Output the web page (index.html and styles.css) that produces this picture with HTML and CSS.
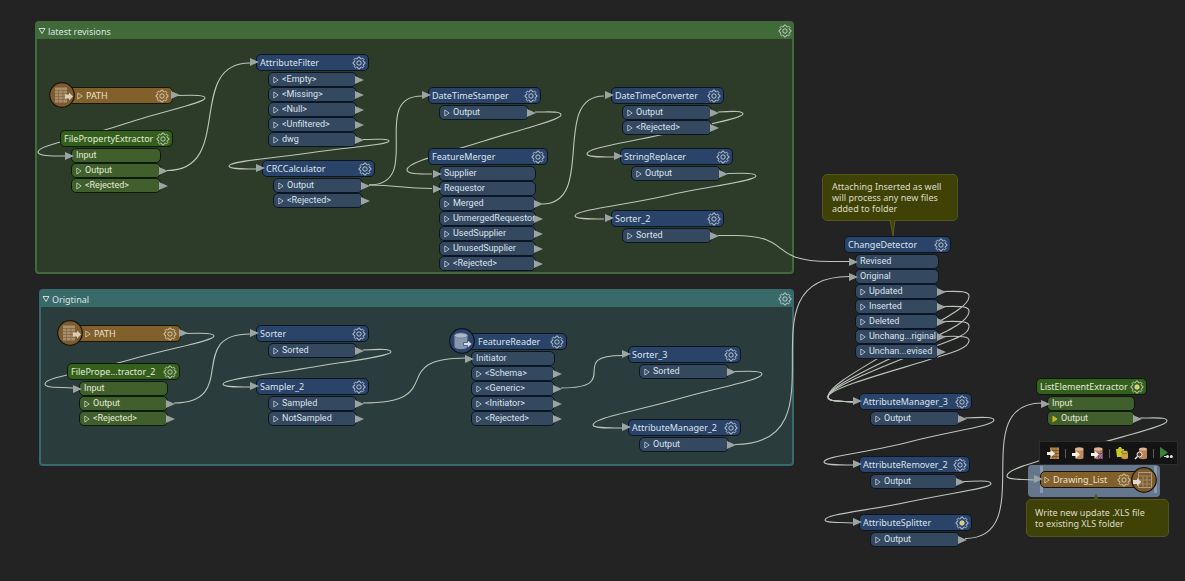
FILE: index.html
```html
<!DOCTYPE html>
<html lang="en">
<head>
<meta charset="utf-8">
<title>Workspace</title>
<link rel="stylesheet" href="styles.css">
</head>
<body>
<svg class="defs" aria-hidden="true">
  <symbol id="gear" viewBox="0 0 14 14"><path d="M12.9 6.1V7.9L11.5 8.2 11.1 9.35 11.9 10.5 10.5 11.9 9.35 11.1 8.2 11.5 7.9 12.9H6.1L5.8 11.5 4.65 11.1 3.5 11.9 2.1 10.5 2.9 9.35 2.5 8.2 1.1 7.9V6.1L2.5 5.8 2.9 4.65 2.1 3.5 3.5 2.1 4.65 2.9 5.8 2.5 6.1 1.1H7.9L8.2 2.5 9.35 2.9 10.5 2.1 11.9 3.5 11.1 4.65 11.5 5.8Z" fill="none" stroke="currentColor" stroke-width=".8"/><circle cx="7" cy="7" r="2.2" stroke="currentColor" stroke-width=".8"/></symbol>
  <symbol id="tri" viewBox="0 0 6 8"><path d="M.8 1V7L5.2 4Z" fill="var(--tri-fill, none)" stroke="currentColor" stroke-width=".7"/></symbol>
  <symbol id="reader" viewBox="0 0 26 26"><circle cx="13" cy="13" r="12.3" fill="#7d5c30" stroke="#1a140a" stroke-width="1.2"/><path d="M6 5.500H18V20.500H6Z" fill="#a78f6c"/><path d="M6 8.500H18M6 11.500H18M6 14.500H18M6 17.500H18M9.500 8V20.500M14 8V20.500" stroke="#866740" stroke-width=".8"/><path d="M16 12.500H20V10.500L24 14.500 20 18.500V16.500H16Z" fill="#dccdb6"/></symbol>
  <symbol id="writer" viewBox="0 0 26 26"><circle cx="13" cy="13" r="12.3" fill="#7d5c30" stroke="#1a140a" stroke-width="1.2"/><path d="M7.500 5.500H20.500V20.500H7.500Z" fill="none" stroke="#b19d7f"/><path d="M7.500 9H20.500M7.500 13H20.500M7.500 17H20.500M12 9V20.500M16 9V20.500" stroke="#a78f6c" stroke-width=".9"/><path d="M2 13H6V11L10.500 15 6 19V17H2Z" fill="#e4d9c8"/></symbol>
  <symbol id="database" viewBox="0 0 26 26"><circle cx="13" cy="13" r="12.3" fill="#2d4468" stroke="#0b1322" stroke-width="1.2"/><path d="M5.500 7V18.500C5.500 22 18.500 22 18.500 18.500V7Z" fill="#8796ad"/><ellipse cx="12" cy="7.500" rx="6.500" ry="2.600" fill="#a9b5c6" stroke="#5f7290" stroke-width=".6"/><path d="M14.500 14.500H18.500V12L23 16 18.500 20V17.500H14.500Z" fill="#d5dde8" stroke="#2d4468" stroke-width=".7"/></symbol>
</svg>

<main class="canvas">
  <section class="bookmark bookmark-green">
    <header><button aria-label="Collapse latest revisions"><svg width="8" height="8" viewBox="0 0 8 8"><path d="M1 1.500H7L4 6.500Z" fill="none" stroke="currentColor" stroke-width=".9"/></svg></button><h2>latest revisions</h2><button aria-label="Bookmark properties"><svg class="gear"><use href="#gear"/></svg></button></header>
  </section>
  <section class="bookmark bookmark-teal">
    <header><button aria-label="Collapse Origtinal"><svg width="8" height="8" viewBox="0 0 8 8"><path d="M1 1.500H7L4 6.500Z" fill="none" stroke="currentColor" stroke-width=".9"/></svg></button><h2>Origtinal</h2><button aria-label="Bookmark properties"><svg class="gear"><use href="#gear"/></svg></button></header>
  </section>

  <div class="selection"></div>

  <svg class="wires" aria-hidden="true">
    <path d="M178 95.500C196 95 205 95 205 98C205 103 163 111 121 125S38 145 38 152C38 156 50 156 66 156"/>
    <path d="M167 170.500C235 170.500 185 63 250 63"/>
    <path d="M363 139.500C380 139 389 139 389 141C389 145 349 147 309 153S229 161 229 166C229 169 240 169 257 169"/>
    <path d="M369 185C425 185 368 96 422 96"/>
    <path d="M369 185C400 185 400 188.500 432 188.500"/>
    <path d="M535 112C552 112 561 111 561 115C561 120 522 129 484 141S407 162 407 170C407 174 418 174 432 174"/>
    <path d="M542 204C597 204 550 96 604 96"/>
    <path d="M718 112C735 111 743 111 743 114C743 118 710 124 665 134S587 148 587 154C587 157 598 157 614 157"/>
    <path d="M727 173.500C746 173 756 173 756 176C756 181 710 186 665 196S575 210 575 216C575 219 588 219 604 219"/>
    <path d="M718 235.500H735C795 236 765 261 830 261.500H849"/>
    <path d="M735 444.500C850 444 735 276.500 849 276.500"/>
    <path d="M184 333.500C204 333 214 333 214 336C214 341 171 348 129 360S45 377 45 384C45 388 56 387 73 388"/>
    <path d="M174 403C240 403 185 334 250 334"/>
    <path d="M363 350C382 349 391 349 391 352C391 356 349 361 307 368S223 379 223 384C223 387 234 387 250 387"/>
    <path d="M363 403C450 403 385 358 466 358"/>
    <path d="M561 388C625 388 565 355.500 622 355.500"/>
    <path d="M735 371.500C753 371 762 371 762 374C762 380 720 387 678 399S593 418 593 425C593 428 604 428 622 428"/>
    <path d="M943 291.500C960 291 970 291 969 297C968 308 940 320 905 342S828 385 828 397C828 402 840 401 853 402"/>
    <path d="M943 306.500C960 306 970 306 969 312C968 323 943 333 908 350S828 387 828 397C828 402 840 401 853 402"/>
    <path d="M943 321.500C960 321 970 321 969 327C968 337 947 341 912 355S828 388 828 397C828 402 840 401 853 402"/>
    <path d="M943 336.500C960 336 970 336 969 341C968 349 950 353 925 361S828 388 828 397C828 402 840 401 853 402"/>
    <path d="M965 418C984 417 994 417 994 420C994 426 951 431 909 442S824 456 824 462C824 465 835 465 853 465"/>
    <path d="M963 481.500C982 481 991 480 991 484C991 488 950 493 908 502S825 514 825 520C825 523 836 522 853 523"/>
    <path d="M965 538.500C1040 538 965 403 1042 403"/>
    <path d="M1140 418C1158 418 1167 417 1167 421C1167 426 1127 435 1087 447S1007 468 1007 476C1007 480 1018 479 1034 480"/>
  </svg>

  <article class="node brown path-1"><svg class="badge"><use href="#reader"/></svg><h3 class="out"><svg class="tri"><use href="#tri"/></svg><span>PATH</span><button aria-label="PATH parameters"><svg class="gear"><use href="#gear"/></svg></button></h3></article>

  <article class="node green extractor-1"><h3><span>FilePropertyExtractor</span><button aria-label="Parameters"><svg class="gear"><use href="#gear"/></svg></button></h3>
    <ul><li class="in">Input</li><li class="out"><svg class="tri"><use href="#tri"/></svg>Output</li><li class="out"><svg class="tri"><use href="#tri"/></svg>&lt;Rejected&gt;</li></ul></article>

  <article class="node filter"><h3 class="in"><span>AttributeFilter</span><button aria-label="Parameters"><svg class="gear"><use href="#gear"/></svg></button></h3>
    <ul><li class="out"><svg class="tri"><use href="#tri"/></svg>&lt;Empty&gt;</li><li class="out"><svg class="tri"><use href="#tri"/></svg>&lt;Missing&gt;</li><li class="out"><svg class="tri"><use href="#tri"/></svg>&lt;Null&gt;</li><li class="out"><svg class="tri"><use href="#tri"/></svg>&lt;Unfiltered&gt;</li><li class="out"><svg class="tri"><use href="#tri"/></svg>dwg</li></ul></article>

  <article class="node crc"><h3 class="in"><span>CRCCalculator</span><button aria-label="Parameters"><svg class="gear"><use href="#gear"/></svg></button></h3>
    <ul><li class="out"><svg class="tri"><use href="#tri"/></svg>Output</li><li class="out"><svg class="tri"><use href="#tri"/></svg>&lt;Rejected&gt;</li></ul></article>

  <article class="node stamper"><h3 class="in"><span>DateTimeStamper</span><button aria-label="Parameters"><svg class="gear"><use href="#gear"/></svg></button></h3>
    <ul><li class="out"><svg class="tri"><use href="#tri"/></svg>Output</li></ul></article>

  <article class="node merger"><h3><span>FeatureMerger</span><button aria-label="Parameters"><svg class="gear"><use href="#gear"/></svg></button></h3>
    <ul><li class="in">Supplier</li><li class="in">Requestor</li><li class="out"><svg class="tri"><use href="#tri"/></svg>Merged</li><li class="out"><svg class="tri"><use href="#tri"/></svg>UnmergedRequestor</li><li class="out"><svg class="tri"><use href="#tri"/></svg>UsedSupplier</li><li class="out"><svg class="tri"><use href="#tri"/></svg>UnusedSupplier</li><li class="out"><svg class="tri"><use href="#tri"/></svg>&lt;Rejected&gt;</li></ul></article>

  <article class="node converter"><h3 class="in"><span>DateTimeConverter</span><button aria-label="Parameters"><svg class="gear"><use href="#gear"/></svg></button></h3>
    <ul><li class="out"><svg class="tri"><use href="#tri"/></svg>Output</li><li class="out"><svg class="tri"><use href="#tri"/></svg>&lt;Rejected&gt;</li></ul></article>

  <article class="node replacer"><h3 class="in"><span>StringReplacer</span><button aria-label="Parameters"><svg class="gear"><use href="#gear"/></svg></button></h3>
    <ul><li class="out"><svg class="tri"><use href="#tri"/></svg>Output</li></ul></article>

  <article class="node sorter-2"><h3 class="in"><span>Sorter_2</span><button aria-label="Parameters"><svg class="gear"><use href="#gear"/></svg></button></h3>
    <ul><li class="out"><svg class="tri"><use href="#tri"/></svg>Sorted</li></ul></article>

  <article class="node brown path-2"><svg class="badge"><use href="#reader"/></svg><h3 class="out"><svg class="tri"><use href="#tri"/></svg><span>PATH</span><button aria-label="PATH parameters"><svg class="gear"><use href="#gear"/></svg></button></h3></article>

  <article class="node green extractor-2"><h3><span>FilePrope...tractor_2</span><button aria-label="Parameters"><svg class="gear"><use href="#gear"/></svg></button></h3>
    <ul><li class="in">Input</li><li class="out"><svg class="tri"><use href="#tri"/></svg>Output</li><li class="out"><svg class="tri"><use href="#tri"/></svg>&lt;Rejected&gt;</li></ul></article>

  <article class="node sorter-1"><h3 class="in"><span>Sorter</span><button aria-label="Parameters"><svg class="gear"><use href="#gear"/></svg></button></h3>
    <ul><li class="out"><svg class="tri"><use href="#tri"/></svg>Sorted</li></ul></article>

  <article class="node sampler"><h3 class="in"><span>Sampler_2</span><button aria-label="Parameters"><svg class="gear"><use href="#gear"/></svg></button></h3>
    <ul><li class="out"><svg class="tri"><use href="#tri"/></svg>Sampled</li><li class="out"><svg class="tri"><use href="#tri"/></svg>NotSampled</li></ul></article>

  <article class="node feature-reader"><svg class="badge"><use href="#database"/></svg><h3><span>FeatureReader</span><button aria-label="Parameters"><svg class="gear"><use href="#gear"/></svg></button></h3>
    <ul><li class="in">Initiator</li><li class="out"><svg class="tri"><use href="#tri"/></svg>&lt;Schema&gt;</li><li class="out"><svg class="tri"><use href="#tri"/></svg>&lt;Generic&gt;</li><li class="out"><svg class="tri"><use href="#tri"/></svg>&lt;Initiator&gt;</li><li class="out"><svg class="tri"><use href="#tri"/></svg>&lt;Rejected&gt;</li></ul></article>

  <article class="node sorter-3"><h3 class="in"><span>Sorter_3</span><button aria-label="Parameters"><svg class="gear"><use href="#gear"/></svg></button></h3>
    <ul><li class="out"><svg class="tri"><use href="#tri"/></svg>Sorted</li></ul></article>

  <article class="node manager-2"><h3 class="in"><span>AttributeManager_2</span><button aria-label="Parameters"><svg class="gear"><use href="#gear"/></svg></button></h3>
    <ul><li class="out"><svg class="tri"><use href="#tri"/></svg>Output</li></ul></article>

  <article class="node detector"><h3><span>ChangeDetector</span><button aria-label="Parameters"><svg class="gear"><use href="#gear"/></svg></button></h3>
    <ul><li class="in">Revised</li><li class="in">Original</li><li class="out"><svg class="tri"><use href="#tri"/></svg>Updated</li><li class="out"><svg class="tri"><use href="#tri"/></svg>Inserted</li><li class="out"><svg class="tri"><use href="#tri"/></svg>Deleted</li><li class="out"><svg class="tri"><use href="#tri"/></svg>Unchang...riginal</li><li class="out"><svg class="tri"><use href="#tri"/></svg>Unchan...evised</li></ul></article>

  <article class="node manager-3"><h3 class="in"><span>AttributeManager_3</span><button aria-label="Parameters"><svg class="gear"><use href="#gear"/></svg></button></h3>
    <ul><li class="out"><svg class="tri"><use href="#tri"/></svg>Output</li></ul></article>

  <article class="node remover"><h3 class="in"><span>AttributeRemover_2</span><button aria-label="Parameters"><svg class="gear"><use href="#gear"/></svg></button></h3>
    <ul><li class="out"><svg class="tri"><use href="#tri"/></svg>Output</li></ul></article>

  <article class="node splitter"><h3 class="in"><span>AttributeSplitter</span><button aria-label="Parameters"><svg class="gear warn"><use href="#gear"/></svg></button></h3>
    <ul><li class="out"><svg class="tri"><use href="#tri"/></svg>Output</li></ul></article>

  <article class="node green list-extractor"><h3><span>ListElementExtractor</span><button aria-label="Parameters"><svg class="gear warn"><use href="#gear"/></svg></button></h3>
    <ul><li class="in">Input</li><li class="out"><svg class="tri marked"><use href="#tri"/></svg>Output</li></ul></article>

  <article class="node brown drawing-list"><h3 class="in"><svg class="tri"><use href="#tri"/></svg><span>Drawing_List</span><button aria-label="Drawing_List parameters"><svg class="gear"><use href="#gear"/></svg></button></h3><svg class="badge"><use href="#writer"/></svg></article>

  <div class="toolbar" role="toolbar" aria-label="Writer actions">
    <button aria-label="Write to table"><svg viewBox="0 0 14 14"><path d="M4 1.500H13V13H4Z" fill="#b58a4e"/><path d="M4 4.500H13M4 7.500H13M4 10.500H13M7 1.500V13M10 1.500V13" stroke="#6a4a20" stroke-width=".7"/><path d="M1 6H5V4L9 7.500 5 11V9H1Z" fill="#f0ece2"/></svg></button>
    <i></i>
    <button aria-label="Write to database"><svg viewBox="0 0 14 14"><path d="M4 3V12C4 13.500 12.500 13.500 12.500 12V3Z" fill="#c08a5a"/><ellipse cx="8.250" cy="3" rx="4.250" ry="1.700" fill="#e0b48c"/><path d="M1 7H5V5L9 8.500 5 12V10H1Z" fill="#f4f0e8"/></svg></button>
    <button aria-label="Write to other database"><svg viewBox="0 0 14 14"><path d="M4 3V12C4 13.500 12.500 13.500 12.500 12V3Z" fill="#b57f62"/><path d="M8 7H13V13H8Z" fill="#7d4673"/><path d="M9 8L12 12M12 8L9 12" stroke="#c99ac0" stroke-width=".8"/><ellipse cx="8.250" cy="3" rx="4.250" ry="1.700" fill="#e0b48c"/><path d="M1 7H5V5L9 8.500 5 12V10H1Z" fill="#f4f0e8"/></svg></button>
    <i></i>
    <button aria-label="Copy data"><svg viewBox="0 0 14 14"><path d="M1 3H3L4 1H6L7 3H9V11H2Z" fill="#c9c91f"/><path d="M6.500 6V12C6.500 13.500 13 13.500 13 12V6Z" fill="#c9a13e"/><ellipse cx="9.750" cy="6" rx="3.250" ry="1.300" fill="#e6cf7a" stroke="#3a3210" stroke-width=".6"/></svg></button>
    <button aria-label="Inspect data"><svg viewBox="0 0 14 14"><path d="M5 3V12C5 13.500 13 13.500 13 12V3Z" fill="#bb8455"/><ellipse cx="9" cy="3" rx="4" ry="1.600" fill="#dfb48e"/><circle cx="5.500" cy="8.500" r="2.500" fill="#5a4632" stroke="#f0ece4"/><path d="M3.500 10.500L1 13" stroke="#f0ece4" stroke-width="1.400"/></svg></button>
    <i></i>
    <button aria-label="Run to this"><svg viewBox="0 0 14 14"><path d="M1 1V12L9 6.500Z" fill="#39823b"/><path d="M5 10.500H9" stroke="#dfe6df"/><circle cx="8.500" cy="10.500" r="1.500" fill="#dfe6df"/><circle cx="12.300" cy="10.500" r="1.500" fill="#dfe6df"/></svg></button>
  </div>

  <aside class="note note-1">Attaching Inserted as well<br>will process any new files<br>added to folder<svg class="tail" viewBox="0 0 8 17"><path d="M1 0L4 16 6 0" fill="#454512" stroke="#66662a" stroke-width=".8"/></svg></aside>
  <aside class="note note-2">Write new update .XLS file<br>to existing XLS folder<svg class="tail up" viewBox="0 0 6 6"><path d="M0 6L3 0 6 6Z" fill="#4a4f1c"/></svg></aside>
</main>
</body>
</html>
```
FILE: styles.css
```css
* { box-sizing: border-box; }

body {
  margin: 0;
  background: #232323;
  color: #dde2e6;
  font: 9px/13px "Noto Sans", "DejaVu Sans", sans-serif;
}

h2, h3, ul { margin: 0; padding: 0; font: inherit; }
ul { list-style: none; }

button {
  display: block;
  padding: 0;
  border: 0;
  background: none;
  color: inherit;
  cursor: pointer;
}

button svg { display: block; }
.defs { position: absolute; width: 0; height: 0; }

.canvas {
  position: relative;
  min-height: 100vh;
  overflow: hidden;
}

.wires {
  position: absolute;
  inset: 0;
  width: 100%;
  height: 100%;
  fill: none;
  stroke: #bcc4bb;
  stroke-width: 1.1;
}

.gear { width: 14px; height: 14px; fill: none; }
.gear.warn { fill: #d6cf3a; }
.tri { flex: none; width: 6px; height: 8px; }
.tri.marked { --tri-fill: #c8bc1c; color: #c8bc1c; }

/* Bookmarks */
.bookmark {
  position: absolute;
  border: 2px solid;
  border-radius: 4px;
}

.bookmark header {
  display: flex;
  align-items: center;
  gap: 2px;
  height: 16px;
  padding: 0 0 0 1px;
}

.bookmark h2 { flex: 1; }
.bookmark-green { left: 35px; top: 21px; width: 759px; height: 253px; border-color: #406a3a; background: #2c3c29; }
.bookmark-green header { background: #406a38; }
.bookmark-teal { left: 39px; top: 289px; width: 755px; height: 177px; border-color: #376a68; background: #2a3c3b; }
.bookmark-teal header { background: #376a68; }

/* Transformers */
.node {
  --head: #2a4368;
  --row: #34485f;
  --edge: #0b1524;
  position: absolute;
  width: 113px;
  color: #dbe3ee;
}

.green { --head: #355f1d; --row: #415f2c; --edge: #0d1a08; color: #e2ead9; }
.brown { --head: #81602c; --edge: #1c1408; color: #ece0cc; }

.node h3, .node li {
  position: relative;
  display: flex;
  align-items: center;
  border: 1px solid var(--edge);
  border-radius: 5px;
}

.node h3 { height: 17px; padding: 0 2px 0 3px; background: var(--head); white-space: nowrap; }
.node h3 span { flex: 1; min-width: 0; }
.node ul { margin: 1px 12px 0 11px; }
.node li { gap: 3px; height: 15px; padding: 0 4px; background: var(--row); font-family: Roboto, "Noto Sans", sans-serif; white-space: nowrap; }

.in::before, .out::after {
  content: "";
  position: absolute;
  top: 3px;
  width: 9px;
  height: 8px;
  background: #9ba3a3;
  clip-path: polygon(0 0, 100% 50%, 0 100%);
}

.in::before { left: -7px; }
.out::after { right: -8px; }

.badge { position: absolute; top: -5px; left: 0; z-index: 1; width: 26px; height: 26px; }
.node.brown h3 { gap: 3px; }
.node.path-1 h3, .node.path-2 h3 { margin-left: 13px; padding-left: 14px; padding-right: 3px; }

.path-1 { left: 49px; top: 87px; width: 124px; }
.extractor-1 { left: 60px; top: 130px; }
.filter { left: 256px; top: 54px; }
.crc { left: 262px; top: 160px; }
.stamper { left: 428px; top: 87px; }
.merger { left: 428px; top: 148px; width: 120px; }
.converter { left: 611px; top: 87px; }
.replacer { left: 620px; top: 148px; }
.sorter-2 { left: 611px; top: 210px; }
.path-2 { left: 57px; top: 325px; width: 124px; }
.extractor-2 { left: 67px; top: 363px; }
.extractor-2 ul { margin-left: 12px; }
.sorter-1 { left: 256px; top: 325px; }
.sampler { left: 256px; top: 378px; }
.filter ul, .sorter-1 ul, .sampler ul { margin-left: 12px; }
.feature-reader { left: 449px; top: 333px; width: 118px; }
.node.feature-reader h3 { margin-left: 13px; padding-left: 15px; }
.node.feature-reader ul { margin-left: 22px; }
.sorter-3 { left: 628px; top: 346px; }
.manager-2 { left: 628px; top: 419px; }
.detector { left: 844px; top: 236px; width: 107px; }
.manager-3 { left: 859px; top: 393px; }
.remover { left: 859px; top: 456px; width: 111px; }
.splitter { left: 859px; top: 514px; }
.list-extractor { left: 1036px; top: 378px; width: 111px; }
.drawing-list { left: 1040px; top: 471px; width: 117px; }
.node.drawing-list h3 { margin-right: 12px; padding-right: 13px; }
.drawing-list .badge { left: auto; right: 0; top: -4px; }

.selection {
  position: absolute;
  left: 1028px;
  top: 465px;
  width: 132px;
  height: 32px;
  border-radius: 4px;
  background: #64778c;
}

.selection::before {
  content: "";
  position: absolute;
  inset: 1px 3px 4px 12px;
  border: solid #8b9bad;
  border-width: 0 3px;
}

.toolbar {
  position: absolute;
  left: 1039px;
  top: 441px;
  display: flex;
  align-items: center;
  gap: 5px;
  height: 24px;
  padding: 0 4px 0 6px;
  border: 1px solid #2c2c2c;
  background: #141414;
}

.toolbar svg { width: 14px; height: 14px; }
.toolbar i { width: 1px; height: 9px; background: #5d5d55; }

/* Annotations */
.note {
  position: absolute;
  padding: 6px 9px;
  border: 1px solid #53551c;
  border-radius: 5px;
  background: #3f4207;
  color: #dcdcc4;
  line-height: 11px;
  white-space: nowrap;
}

.note-1 { left: 822px; top: 174px; width: 136px; }
.note-2 { left: 1026px; top: 499px; width: 143px; padding: 7px 8px; }
.tail { position: absolute; left: 66px; top: 100%; width: 8px; height: 17px; }
.tail.up { top: -6px; width: 6px; height: 6px; }
```
